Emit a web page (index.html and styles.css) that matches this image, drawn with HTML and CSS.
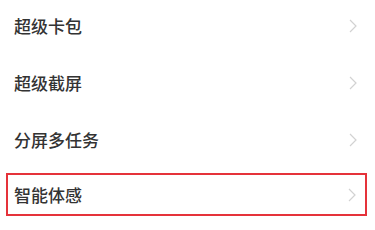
FILE: index.html
```html
<!DOCTYPE html>
<html lang="zh-CN">

<head>
  <meta charset="UTF-8">
  <meta name="viewport" content="width=device-width, initial-scale=1.0">
  <title>设置</title>
  <link rel="stylesheet" href="styles.css">
</head>

<body>
  <section class="list">
    <div class="row">
      <span class="label">超级卡包</span>
      <svg class="arrow" viewBox="0 0 8 14"><polyline points="1,1 7,7 1,13" /></svg>
    </div>
    <div class="row">
      <span class="label">超级截屏</span>
      <svg class="arrow" viewBox="0 0 8 14"><polyline points="1,1 7,7 1,13" /></svg>
    </div>
    <div class="row">
      <span class="label">分屏多任务</span>
      <svg class="arrow" viewBox="0 0 8 14"><polyline points="1,1 7,7 1,13" /></svg>
    </div>
    <div class="row marked">
      <span class="label">智能体感</span>
      <svg class="arrow" viewBox="0 0 8 14"><polyline points="1,1 7,7 1,13" /></svg>
    </div>
  </section>
</body>

</html>
```

FILE: styles.css
```css
body {
  margin: 0;
  padding: 0;
  background-color: #fff;
  font-family: "Noto Sans CJK SC", "Noto Sans", sans-serif;
}

.list {
  display: flex;
  flex-direction: column;
  gap: 14px;
  padding-top: 4px;
}

.row {
  box-sizing: border-box;
  height: 43px;
  display: flex;
  align-items: center;
  justify-content: space-between;
  padding: 0 18px 0 14px;
}

.label {
  font-size: 17px;
  font-weight: 500;
  color: #333;
}

.arrow {
  width: 8px;
  height: 14px;
}

.arrow polyline {
  fill: none;
  stroke: #d2d2d2;
  stroke-width: 1.2;
}

/* highlighted row */
.row.marked {
  margin: -2px 8px 0 6px;
  padding: 0 9px 0 6px;
  border: 2px solid #e5323a;
}
```
